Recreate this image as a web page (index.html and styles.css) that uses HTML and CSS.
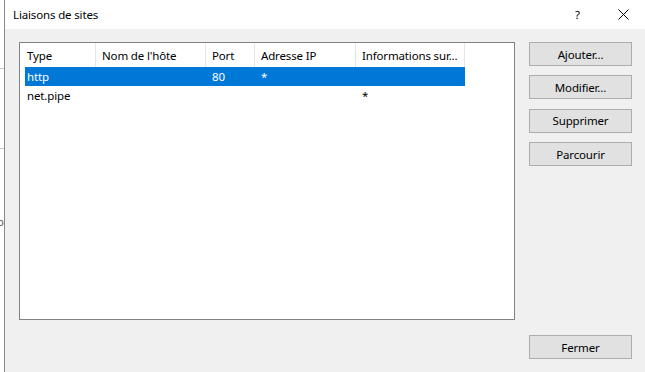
FILE: index.html
```html
<!DOCTYPE html>
<html lang="fr">
<head>
    <meta charset="UTF-8">
    <title>Liaisons de sites</title>
    <link rel="stylesheet" href="styles.css">
</head>
<body>
    <div class="screen">
        <div class="behind">
            <span class="tick tick-1"></span>
            <span class="tick tick-2"></span>
            <span class="peek">o</span>
        </div>

        <div class="dialog">
            <div class="titlebar">
                <span class="title">Liaisons de sites</span>
                <span class="help">?</span>
                <span class="close">
                    <svg width="11" height="11" viewBox="0 0 11 11">
                        <path d="M0.5 0.5 L10.5 10.5 M10.5 0.5 L0.5 10.5" stroke="#000" stroke-width="1" fill="none"/>
                    </svg>
                </span>
            </div>

            <div class="content">
                <div class="listview">
                    <div class="lv-header">
                        <div class="col">Type</div>
                        <div class="col">Nom de l'hôte</div>
                        <div class="col">Port</div>
                        <div class="col">Adresse IP</div>
                        <div class="col">Informations sur...</div>
                    </div>
                    <div class="lv-row selected">
                        <div class="cell">http</div>
                        <div class="cell"></div>
                        <div class="cell">80</div>
                        <div class="cell">*</div>
                        <div class="cell"></div>
                    </div>
                    <div class="lv-row">
                        <div class="cell">net.pipe</div>
                        <div class="cell"></div>
                        <div class="cell"></div>
                        <div class="cell"></div>
                        <div class="cell">*</div>
                    </div>
                </div>

                <div class="actions">
                    <button class="btn">Ajouter...</button>
                    <button class="btn">Modifier...</button>
                    <button class="btn">Supprimer</button>
                    <button class="btn">Parcourir</button>
                </div>
            </div>

            <div class="footer">
                <button class="btn">Fermer</button>
            </div>
        </div>
    </div>
</body>
</html>
```

FILE: styles.css
```css
body, html {
    margin: 0;
    padding: 0;
    font-family: "Segoe UI", "Noto Sans", Arial, sans-serif;
    font-size: 11.5px;
    letter-spacing: -0.15px;
    color: #000000;
}

.screen {
    display: flex;
    width: 645px;
    height: 372px;
    overflow: hidden;
    background-color: #f0f0f0;
}

/* window underneath, only a sliver shows */
.behind {
    position: relative;
    width: 4px;
    background-color: #ffffff;
    border-right: 1px solid #8a8a8a;
}

.tick {
    position: absolute;
    left: 0;
    width: 4px;
    height: 1px;
    background-color: #c8c8c8;
}

.tick-1 {
    top: 68px;
}

.tick-2 {
    top: 148px;
}

.peek {
    position: absolute;
    left: -3px;
    top: 214px;
    color: #555555;
}

.dialog {
    flex: 1;
    display: flex;
    flex-direction: column;
}

.titlebar {
    display: flex;
    align-items: center;
    height: 29px;
    background-color: #ffffff;
    padding-left: 8px;
}

.title {
    flex: 1;
}

.help {
    width: 14px;
    margin-right: 29px;
}

.close {
    display: flex;
    width: 11px;
    margin-right: 16px;
}

.content {
    display: flex;
    gap: 14px;
    padding: 13px 13px 0 14px;
}

.listview {
    width: 494px;
    height: 276px;
    background-color: #ffffff;
    border: 1px solid #828282;
}

.lv-header {
    display: grid;
    grid-template-columns: 76px 110px 49px 101px 109px;
    height: 24px;
}

.lv-header .col {
    display: flex;
    align-items: center;
    padding-left: 6px;
    border-right: 1px solid #e5e5e5;
    white-space: nowrap;
    overflow: hidden;
}

.lv-header .col:first-child {
    padding-left: 7px;
}

.lv-row {
    display: grid;
    grid-template-columns: 71px 110px 49px 101px 109px;
    width: 440px;
    height: 19px;
    margin-left: 5px;
}

.lv-row .cell {
    display: flex;
    align-items: center;
    padding-left: 6px;
    white-space: nowrap;
}

.lv-row .cell:first-child {
    padding-left: 2px;
}

.lv-row.selected {
    background-color: #0078d7;
    color: #ffffff;
}

.actions {
    display: flex;
    flex-direction: column;
    gap: 9.4px;
}

.btn {
    width: 103px;
    height: 24px;
    padding: 0;
    font-family: inherit;
    font-size: 11.5px;
    letter-spacing: -0.15px;
    color: #000000;
    background-color: #e1e1e1;
    border: 1px solid #adadad;
}

.footer {
    display: flex;
    justify-content: flex-end;
    padding: 15px 13px 0 0;
}
```
